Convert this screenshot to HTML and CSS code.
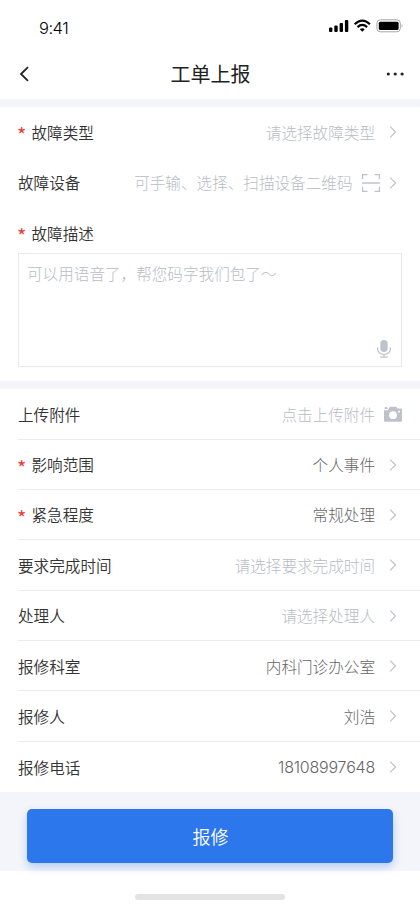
FILE: index.html
```html
<!DOCTYPE html>
<html lang="zh-CN">
<head>
<meta charset="utf-8">
<title>工单上报</title>
<link rel="stylesheet" href="styles.css">
</head>
<body>
<svg class="defs" aria-hidden="true">
  <symbol id="chevron" viewBox="0 0 8 14"><path d="M1.2 1.6 6.5 7 1.2 12.4" fill="none" stroke="#bec2ca" stroke-width="1.2"/></symbol>
</svg>
<header class="status">
  <span class="time">9:41</span>
  <svg class="indicators" viewBox="0 0 77 16" width="77" height="16">
    <g fill="#000"><rect x="1" y="9.6" width="3.4" height="4.4" rx="1"/><rect x="6.3" y="7.6" width="3.4" height="6.4" rx="1"/><rect x="11.6" y="5" width="3.4" height="9" rx="1"/><rect x="16.9" y="2" width="3.4" height="12" rx="1"/></g>
    <g fill="none" stroke="#000" stroke-width="2.2"><path d="M26.7 6.2Q34.3-.9 41.9 6.2M29.5 9.1q4.8-4.3 9.6 0"/></g>
    <path d="M31.8 11.2q2.5-1.8 5 0L34.3 13.8Z"/>
    <rect x="48.9" y="1.8" width="23.4" height="12" rx="3.4" fill="none" stroke="#a6a6a6"/>
    <rect x="50.8" y="3.7" width="19.8" height="8.3" rx="1.6"/>
    <path d="M73.7 5.8q1.6 2 0 4Z" fill="#a6a6a6"/>
  </svg>
</header>
<nav class="nav">
  <svg width="12" height="16" viewBox="0 0 12 16"><path d="M10 1.2 3 8l7 6.8" fill="none" stroke="#222" stroke-width="1.8"/></svg>
  <h1>工单上报</h1>
  <svg width="20" height="6" viewBox="0 0 20 6" fill="#222"><circle cx="3.3" cy="3" r="1.6"/><circle cx="10.2" cy="3" r="1.6"/><circle cx="17.1" cy="3" r="1.6"/></svg>
</nav>
<main>
  <section class="fault">
    <div class="row"><span class="star">*</span><span class="label">故障类型</span><span class="value hint">请选择故障类型</span><svg class="chev"><use href="#chevron"/></svg></div>
    <div class="row"><span class="label">故障设备</span><span class="value hint">可手输、选择、扫描设备二维码</span>
      <svg class="scan" width="20" height="20" viewBox="0 0 20 20" fill="none" stroke="#bec2ca" stroke-width="1.3"><path d="M1.6 6.3V1.6h4.9M13.5 1.6h4.9v4.7M1.6 13.7v4.7h4.9M13.5 18.4h4.9v-4.7M1 10h18"/></svg>
      <svg class="chev"><use href="#chevron"/></svg></div>
    <div class="row"><span class="star">*</span><span class="label">故障描述</span></div>
    <div class="textbox">可以用语音了，帮您码字我们包了～
      <svg class="mic" width="16" height="20" viewBox="0 0 16 20"><rect x="4.3" y="1" width="7.4" height="12" rx="3.7" fill="#bec2ca"/><path d="M1.6 8.5v1.2a6.4 5.7 0 0 0 12.8 0V8.5M8 15.4v2.8M4.2 18.2h7.6" fill="none" stroke="#bec2ca" stroke-width="1.3"/></svg>
    </div>
  </section>
  <section class="details">
    <div class="row"><span class="label">上传附件</span><span class="value hint">点击上传附件</span>
      <svg class="camera" width="18" height="16" viewBox="0 0 18 16"><path fill="#bec2ca" fill-rule="evenodd" d="M0 4.3h3.9L5.8.7h6.4l1.2 1.8H17q1 0 1 1v11.3q0 1-1 1H1q-1 0-1-1ZM.6 1.3h3v1.7h-3ZM9 5.3a3.9 3.9 0 1 0 0 7.8 3.9 3.9 0 0 0 0-7.8M14.2 4.7v1.7H16V4.7Z"/></svg></div>
    <div class="row"><span class="star">*</span><span class="label">影响范围</span><span class="value">个人事件</span><svg class="chev"><use href="#chevron"/></svg></div>
    <div class="row"><span class="star">*</span><span class="label">紧急程度</span><span class="value">常规处理</span><svg class="chev"><use href="#chevron"/></svg></div>
    <div class="row"><span class="label">要求完成时间</span><span class="value hint">请选择要求完成时间</span><svg class="chev"><use href="#chevron"/></svg></div>
    <div class="row"><span class="label">处理人</span><span class="value hint">请选择处理人</span><svg class="chev"><use href="#chevron"/></svg></div>
    <div class="row"><span class="label">报修科室</span><span class="value">内科门诊办公室</span><svg class="chev"><use href="#chevron"/></svg></div>
    <div class="row"><span class="label">报修人</span><span class="value">刘浩</span><svg class="chev"><use href="#chevron"/></svg></div>
    <div class="row"><span class="label">报修电话</span><span class="value phone">18108997648</span><svg class="chev"><use href="#chevron"/></svg></div>
  </section>
</main>
<div class="action"><button class="submit">报修</button></div>
<footer class="home"><span class="home-bar"></span></footer>
</body>
</html>
```
FILE: styles.css
```css
* { box-sizing: border-box; }
body {
  margin: 0;
  width: 420px;
  height: 909px;
  overflow: hidden;
  background: #fff;
  color: #333;
  font: 350 15.6px/24px "Noto Sans CJK SC", sans-serif;
}
svg { display: block; flex: none; }
.defs { width: 0; height: 0; position: absolute; }
.status {
  height: 49px;
  padding: 6px 15px 0 39px;
  display: flex;
  align-items: center;
  justify-content: space-between;
}
.time { font: 300 16.5px/20px Inter, sans-serif; letter-spacing: -0.5px; color: #000; }
.indicators { margin-bottom: 4px; }
.nav {
  height: 49.5px;
  padding: 0 15px 0 18px;
  display: flex;
  align-items: center;
  justify-content: space-between;
}
.nav h1 { margin: 0 0 0 6px; font-size: 20px; line-height: 30px; font-weight: 400; color: #222; }
main { background: #f4f5fa; padding-top: 8.8px; }
section { background: #fff; }
.fault { height: 273.5px; }
.details { margin-top: 8.4px; }
.row {
  height: 50.3px;
  margin-left: 18px;
  padding-right: 23px;
  display: flex;
  align-items: center;
}
.label, .value { margin-top: -1px; }
.details .row { height: 50.36px; padding-top: 0.7px; border-bottom: 1px solid #ebecf0; }
.details .row:last-child { border-bottom: 0; }
.star { width: 14.5px; margin-left: -1px; color: #e83c36; font: 20px/20px "Noto Sans CJK SC", sans-serif; padding-top: 6px; }
.value { margin-left: auto; color: #666; font-weight: 300; }
.hint { color: #b8bcc5; }
.chev { width: 8px; height: 14px; margin-left: 14px; }
.scan { margin-left: 8px; }
.scan + .chev { margin-left: 8.5px; }
.camera { margin: 0 -5px 0 9px; }
.phone { font-family: Inter, sans-serif; font-size: 16px; letter-spacing: -0.2px; }
.textbox {
  position: relative;
  height: 114px;
  margin: -5px 18px 0;
  padding: 6.5px 8px;
  border: 1px solid #e8e9ee;
  color: #b8bcc5;
  font-weight: 300;
}
.mic { position: absolute; right: 9px; bottom: 7px; }
.action { height: 79px; padding: 17px 27px 0; background: #f4f5fa; }
.submit {
  display: block;
  width: 366px;
  height: 54px;
  border: 0;
  border-radius: 5px;
  background: #2d77ec;
  box-shadow: 0 4px 8px rgba(45, 119, 236, .32);
  color: #fff;
  font: 350 18px/54px "Noto Sans CJK SC", sans-serif;
  padding: 0 0 0 1px;
}
.home { display: flex; justify-content: center; padding-top: 23px; }
.home-bar { width: 150px; height: 6px; border-radius: 3px; background: #e3e3e3; }
```
